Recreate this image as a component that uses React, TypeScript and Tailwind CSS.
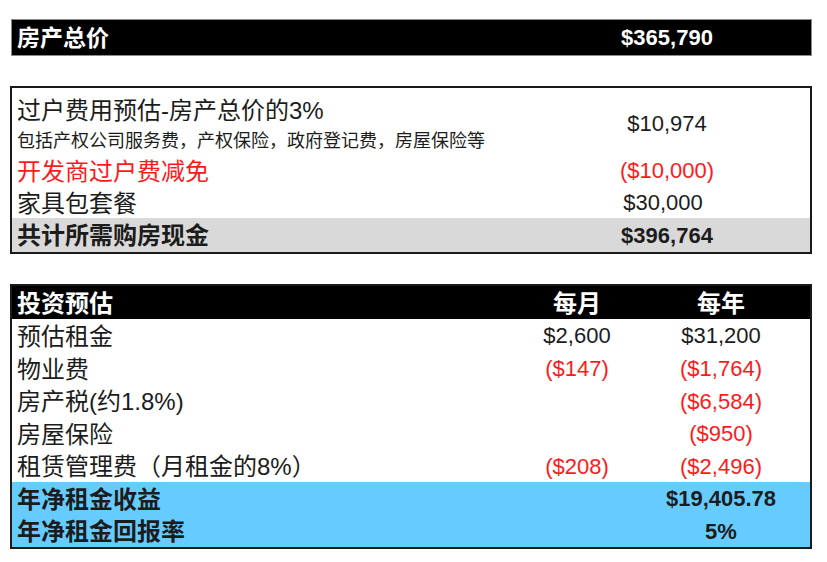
import React from "react";

const red = "text-[#ff1a1a]";

type Row = {
  label: string;
  month?: string;
  year?: string;
  monthRed?: boolean;
  yearRed?: boolean;
  h: string;
};

const rows: Row[] = [
  { label: "预估租金", month: "$2,600", year: "$31,200", h: "h-[33px]" },
  { label: "物业费", month: "($147)", year: "($1,764)", monthRed: true, yearRed: true, h: "h-[33px]" },
  { label: "房产税(约1.8%)", year: "($6,584)", yearRed: true, h: "h-[32px]" },
  { label: "房屋保险", year: "($950)", yearRed: true, h: "h-[33px]" },
  { label: "租赁管理费（月租金的8%）", month: "($208)", year: "($2,496)", monthRed: true, yearRed: true, h: "h-[32px]" },
];

const App = () => {
  return (
    <div className="w-[827px] h-[562px] bg-white pt-[19px] text-[#1c1c1c] font-['Liberation_Sans','Noto_Sans_CJK_SC',sans-serif]">
      {/* 房产总价 */}
      <div className="ml-[11px] w-[801px] h-[37px] bg-black border border-[#8a8a8a] grid grid-cols-[1fr_160px_64px] items-center text-white font-bold">
        <div className="pl-[5px] pt-[2px] text-[23px] leading-none">房产总价</div>
        <div className="text-center text-[22px] leading-none">$365,790</div>
        <div />
      </div>

      {/* 购房现金 */}
      <div className="mt-[30px] ml-[10px] w-[802px] border-2 border-[#1a1a1a]">
        <div className="grid grid-cols-[1fr_160px_63px] h-[67px]">
          <div className="pl-[5px] pt-[9px]">
            <div className="text-[24px] leading-[28px]">过户费用预估-房产总价的3%</div>
            <div className="mt-[4px] text-[18px] leading-[24px]">包括产权公司服务费，产权保险，政府登记费，房屋保险等</div>
          </div>
          <div className="flex items-center justify-center text-[22px] pt-[3px]">$10,974</div>
          <div />
        </div>
        <div className="grid grid-cols-[1fr_160px_63px] h-[32px] items-center">
          <div className={`pl-[5px] pt-[2px] text-[24px] leading-none ${red}`}>开发商过户费减免</div>
          <div className={`text-center text-[22px] leading-none ${red}`}>($10,000)</div>
          <div />
        </div>
        <div className="grid grid-cols-[1fr_160px_63px] h-[31px] items-center">
          <div className="pl-[5px] pt-[2px] text-[24px] leading-none">家具包套餐</div>
          <div className="text-center text-[22px] leading-none pr-[8px]">$30,000</div>
          <div />
        </div>
        <div className="grid grid-cols-[1fr_160px_63px] h-[34px] items-center bg-[#d9d9d9] font-bold">
          <div className="pl-[5px] pt-[2px] text-[24px] leading-none">共计所需购房现金</div>
          <div className="text-center text-[22px] leading-none pt-[1px]">$396,764</div>
          <div />
        </div>
      </div>

      {/* 投资预估 */}
      <div className="mt-[30px] ml-[10px] w-[802px] border-2 border-[#1a1a1a]">
        <div className="grid grid-cols-[1fr_140px_148px_15px] h-[33px] items-center bg-black text-white font-bold text-[24px] leading-none">
          <div className="pl-[5px] pt-[2px]">投资预估</div>
          <div className="text-center pt-[2px]">每月</div>
          <div className="text-center pt-[2px]">每年</div>
          <div />
        </div>
        {rows.map((r) => (
          <div key={r.label} className={`grid grid-cols-[1fr_140px_148px_15px] ${r.h} items-center`}>
            <div className="pl-[5px] pt-[2px] text-[24px] leading-none">{r.label}</div>
            <div className={`text-center text-[22px] leading-none pt-[1px] ${r.monthRed ? red : ""}`}>{r.month}</div>
            <div className={`text-center text-[22px] leading-none pt-[1px] ${r.yearRed ? red : ""}`}>{r.year}</div>
            <div />
          </div>
        ))}
        <div className="bg-[#66ccff] font-bold">
          <div className="grid grid-cols-[1fr_140px_148px_15px] h-[33px] items-center">
            <div className="pl-[5px] pt-[2px] text-[24px] leading-none">年净租金收益</div>
            <div />
            <div className="text-center text-[22px] leading-none pt-[1px]">$19,405.78</div>
            <div />
          </div>
          <div className="grid grid-cols-[1fr_140px_148px_15px] h-[32px] items-center">
            <div className="pl-[5px] pt-[2px] text-[24px] leading-none">年净租金回报率</div>
            <div />
            <div className="text-center text-[22px] leading-none pt-[1px]">5%</div>
            <div />
          </div>
        </div>
      </div>
    </div>
  );
};

export default App;
